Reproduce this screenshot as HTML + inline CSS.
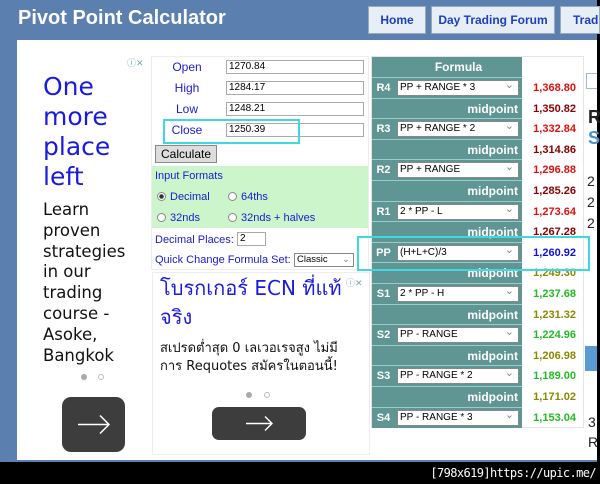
<!DOCTYPE html>
<html><head><style>
*{margin:0;padding:0;box-sizing:border-box}
body{width:600px;height:484px;overflow:hidden;background:#000;font-family:"Liberation Sans",Arial,sans-serif;position:relative}
.a{position:absolute}
#hdr{left:0;top:0;width:597px;height:462px;background:#5b7fae}
#main{left:17px;top:40px;width:580px;height:420px;background:#fff}
.tab{top:6px;height:28px;background:#e8eef5;border:1px solid #9ab;color:#1a3fbf;font-weight:bold;font-size:12px;line-height:26px;text-align:center}
.lbl{color:#1a1ad0;font-size:12px;text-align:center;width:70px}
.inp{left:226px;width:138px;height:14px;border:1px solid #aaa;font-size:10px;line-height:12px;padding-left:2px;background:#fff}
.rl{left:372px;width:23px;height:20px;background:#5f9592;color:#fff;font-weight:bold;font-size:11px;text-align:center;line-height:20px}
.fm{left:395px;width:127px;height:20px;background:#5f9592}
.sel{position:absolute;left:2px;top:2px;width:122px;height:16px;background:#fff;border:1px solid #888;font-size:10px;line-height:14px;padding-left:2px}
.sel:after{content:"⌄";position:absolute;right:4px;top:-3px;color:#888;font-size:11px}
.mp{color:#fff;font-weight:bold;font-size:12px;text-align:right;padding-right:4px;line-height:20px}
.v{left:522px;width:54px;text-align:right;font-weight:bold;font-size:11px;line-height:20px;height:20px}
.rline{left:372px;width:150px;height:1px;background:#9cc}
.rad{color:#1a1ad0;font-size:11px}
.rad i{display:inline-block;width:9px;height:9px;border:1px solid #888;border-radius:50%;vertical-align:-1px;margin-right:4px;background:#fff}
</style></head><body>
<div id="hdr" class="a"></div>
<div class="a" style="left:18px;top:7px;color:#fff;font-weight:bold;font-size:20px">Pivot Point Calculator</div>
<div class="a tab" style="left:368px;width:58px">Home</div>
<div class="a tab" style="left:431px;width:124px">Day Trading Forum</div>
<div class="a tab" style="left:560px;width:40px;text-align:left;padding-left:12px">Trad</div>
<div id="main" class="a"></div>

<!-- left ad -->
<div class="a" style="left:127px;top:56px;font-size:9px;color:#7ab">ⓘ✕</div>
<div class="a" style="left:43px;top:72px;color:#1a1ae0;font-size:25px;line-height:30px;font-family:'DejaVu Sans',sans-serif">One<br>more<br>place<br>left</div>
<div class="a" style="left:43px;top:200px;color:#111;font-size:16.5px;line-height:20.8px;font-family:'DejaVu Sans',sans-serif">Learn<br>proven<br>strategies<br>in our<br>trading<br>course -<br>Asoke,<br>Bangkok</div>
<div class="a" style="left:81px;top:374px;width:6px;height:6px;border-radius:50%;background:#aaa"></div>
<div class="a" style="left:98px;top:374px;width:6px;height:6px;border-radius:50%;border:1px solid #bbb"></div>
<div class="a" style="left:62px;top:397px;width:63px;height:55px;border-radius:9px;background:#3d3d3d"><svg width="63" height="55"><path d="M16 27.5H47M38 18.5L47 27.5L38 36.5" stroke="#fff" stroke-width="1.5" fill="none"/></svg></div>

<!-- form -->
<div class="a" style="left:151px;top:56px;width:218px;height:214px;border:1px solid #eee"></div>
<div class="a lbl" style="left:152px;top:60px">Open</div>
<div class="a lbl" style="left:152px;top:81px">High</div>
<div class="a lbl" style="left:152px;top:102px">Low</div>
<div class="a lbl" style="left:152px;top:123px">Close</div>
<div class="a inp" style="top:60px">1270.84</div>
<div class="a inp" style="top:81px">1284.17</div>
<div class="a inp" style="top:102px">1248.21</div>
<div class="a inp" style="top:123px">1250.39</div>
<div class="a" style="left:163px;top:119px;width:137px;height:25px;border:2px solid #3dd8e0"></div>
<div class="a" style="left:155px;top:145px;width:62px;height:18px;background:#ddd;border:1px solid #888;font-size:12px;text-align:center;line-height:16px">Calculate</div>
<div class="a" style="left:152px;top:166px;width:216px;height:62px;background:#ccf5cc"></div>
<div class="a" style="left:155px;top:170px;color:#1a1ad0;font-size:11px">Input Formats</div>
<div class="a rad" style="left:157px;top:191px"><i style="background:radial-gradient(#333 2px,#fff 2.5px)"></i>Decimal</div>
<div class="a rad" style="left:228px;top:191px"><i></i>64ths</div>
<div class="a rad" style="left:157px;top:212px"><i></i>32nds</div>
<div class="a rad" style="left:228px;top:212px"><i></i>32nds + halves</div>
<div class="a" style="left:155px;top:234px;color:#1a1ad0;font-size:11px">Decimal Places:</div>
<div class="a" style="left:237px;top:232px;width:29px;height:14px;border:1px solid #aaa;font-size:10px;padding-left:2px">2</div>
<div class="a" style="left:155px;top:254px;color:#1a1ad0;font-size:11px">Quick Change Formula Set:</div>
<div class="a" style="left:294px;top:253px;width:60px;height:14px;border:1px solid #888;font-size:9.5px;padding-left:2px;line-height:12px">Classic <span style="color:#888;float:right;padding-right:3px">⌄</span></div>

<!-- thai ad -->
<div class="a" style="left:152px;top:272px;width:218px;height:183px;border:1px solid #eee"></div>
<div class="a" style="left:346px;top:276px;font-size:9px;color:#7ab">ⓘ✕</div>
<div class="a" style="left:160px;top:274px;color:#1a1ae0;font-size:20px;line-height:29px;font-family:'DejaVu Sans',sans-serif;white-space:nowrap">โบรกเกอร์ ECN ที่แท้<br>จริง</div>
<div class="a" style="left:160px;top:340px;color:#111;font-size:13px;line-height:18px;font-family:'DejaVu Sans',sans-serif;white-space:nowrap">สเปรดต่ำสุด 0 เลเวอเรจสูง ไม่มี<br>การ Requotes สมัครในตอนนี้!</div>
<div class="a" style="left:246px;top:392px;width:6px;height:6px;border-radius:50%;background:#aaa"></div>
<div class="a" style="left:264px;top:392px;width:6px;height:6px;border-radius:50%;border:1px solid #bbb"></div>
<div class="a" style="left:212px;top:407px;width:94px;height:33px;border-radius:7px;background:#3d3d3d"><svg width="94" height="33"><path d="M34 16.5H60M53 9.5L60 16.5L53 23.5" stroke="#fff" stroke-width="1.4" fill="none"/></svg></div>

<!-- right table -->
<div class="a" style="left:371px;top:56px;width:213px;height:372px;background:#fff;border:1px solid #e5e5e5"></div>
<div class="a rl" style="top:57px"></div>
<div class="a fm" style="top:57px;color:#fff;font-weight:bold;font-size:12px;text-align:center;line-height:20px">Formula</div>
<div id="rows"></div>
<div class="a" style="left:586px;top:73px;width:11px;height:16px;border:1px solid #9bd;border-right:none"></div>
<div class="a" style="left:588px;top:107px;font-size:18px;font-weight:bold;color:#222">R</div>
<div class="a" style="left:588px;top:128px;font-size:18px;font-weight:bold;color:#4a90d0">S</div>
<div class="a" style="left:587px;top:173px;font-size:14px;color:#222">2</div>
<div class="a" style="left:587px;top:194px;font-size:14px;color:#222">2</div>
<div class="a" style="left:587px;top:215px;font-size:14px;color:#222">2</div>
<div class="a" style="left:585px;top:346px;width:12px;height:25px;background:#5a9bd5"></div>
<div class="a" style="left:588px;top:414px;font-size:14px;color:#222">3</div>
<div class="a" style="left:588px;top:434px;font-size:14px;color:#222">R</div>
<div class="a" style="left:357px;top:236px;width:233px;height:35px;border:2px solid #3dd8e0"></div>
<div class="a" style="right:4px;top:466px;color:#fff;font-size:12px;font-family:'DejaVu Sans Mono',monospace;letter-spacing:-0.6px">[798x619]https://upic.me/</div>
<script>
var rows=[["R4","PP + RANGE * 3","1,368.80","#e01010"],["","midpoint","1,350.82","#8b0000"],["R3","PP + RANGE * 2","1,332.84","#e01010"],["","midpoint","1,314.86","#8b0000"],["R2","PP + RANGE","1,296.88","#e01010"],["","midpoint","1,285.26","#8b0000"],["R1","2 * PP - L","1,273.64","#e01010"],["","midpoint","1,267.28","#8b0000"],["PP","(H+L+C)/3","1,260.92","#1010e0"],["","midpoint","1,249.30","#8a8a00"],["S1","2 * PP - H","1,237.68","#22bb22"],["","midpoint","1,231.32","#8a8a00"],["S2","PP - RANGE","1,224.96","#22bb22"],["","midpoint","1,206.98","#8a8a00"],["S3","PP - RANGE * 2","1,189.00","#22bb22"],["","midpoint","1,171.02","#8a8a00"],["S4","PP - RANGE * 3","1,153.04","#22bb22"]];
var h="";rows.forEach(function(r,i){var t=78+i*20.6;
h+='<div class="a rline" style="top:'+(t-1)+'px"></div>';
h+='<div class="a rl" style="top:'+t+'px">'+r[0]+'</div>';
if(r[0])h+='<div class="a fm" style="top:'+t+'px"><div class="sel">'+r[1]+'</div></div>';
else h+='<div class="a fm mp" style="top:'+t+'px">midpoint</div>';
h+='<div class="a v" style="top:'+t+'px;color:'+r[3]+'">'+r[2]+'</div>';});
document.getElementById("rows").innerHTML=h;
</script>
</body></html>
